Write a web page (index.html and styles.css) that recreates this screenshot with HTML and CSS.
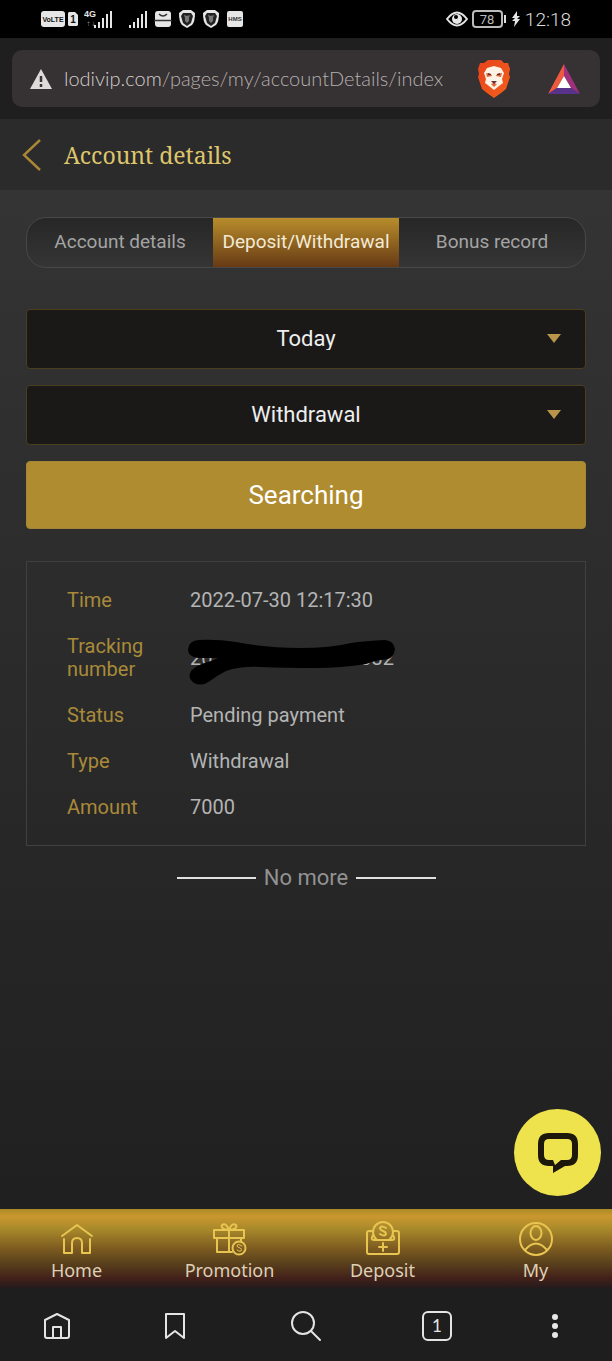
FILE: index.html
```html
<!DOCTYPE html>
<html lang="en">
<head>
<meta charset="utf-8">
<meta name="viewport" content="width=device-width, initial-scale=1">
<title>Account details</title>
<link rel="stylesheet" href="styles.css">
</head>
<body>
<div class="status-bar">
  <div class="status-group status-left">
    <svg class="icon" width="37" height="18" viewBox="0 0 37 18" fill="#e6e6e6">
      <rect x="0" y="1" width="24" height="16" rx="3"/>
      <text x="12" y="12" text-anchor="middle" class="badge-small">VoLTE</text>
      <path d="M28 2h6l3 3v10l-1 1h-8l-1-1V3z"/>
      <text x="32" y="13" text-anchor="middle" class="badge-text">1</text>
    </svg>
    <svg class="icon" width="30" height="20" viewBox="0 0 30 20" fill="#e6e6e6">
      <text x="0" y="8" class="net-text">4G</text>
      <text x="2" y="17" class="net-small">↑↓</text>
      <path d="M10 16h2v3h-2zM14 13h2v6h-2zM18 9h2v10h-2zM22 5h2v14h-2zM26 2h2v17h-2z"/>
    </svg>
    <svg class="icon signal-second" width="20" height="18" viewBox="0 0 20 18" fill="#e6e6e6">
      <path d="M1 15h2v3H1zM5 12h2v6H5zM9 8h2v10H9zM13 4h2v14h-2zM17 1h2v17h-2z"/>
    </svg>
    <svg class="icon" width="18" height="18" viewBox="0 0 18 18">
      <rect x="1" y="1" width="16" height="16" rx="3" fill="#e6e6e6"/>
      <path d="M5 4q4 4 8 0M0 10.500h18" fill="none" stroke="#333" stroke-width="1.500"/>
    </svg>
    <svg class="icon" width="18" height="20" viewBox="0 0 18 20">
      <path d="M5 1h8l4 3q0 9-3 12l-5 3-5-3Q1 13 1 4z" fill="#e6e6e6"/>
      <path d="M5 4h8l2 3-2 7-4 3-4-3-2-7z" fill="#222"/>
      <path d="M6 6l3 1 3-1-1 3v3l-2 2-2-2V9z" fill="#777"/>
    </svg>
    <svg class="icon" width="18" height="20" viewBox="0 0 18 20">
      <path d="M5 1h8l4 3q0 9-3 12l-5 3-5-3Q1 13 1 4z" fill="#e6e6e6"/>
      <path d="M5 4h8l2 3-2 7-4 3-4-3-2-7z" fill="#222"/>
      <path d="M6 6l3 1 3-1-1 3v3l-2 2-2-2V9z" fill="#777"/>
    </svg>
    <svg class="icon" width="18" height="18" viewBox="0 0 18 18">
      <rect x="1" y="1" width="16" height="16" rx="2" fill="#e6e6e6"/>
      <text x="9" y="11" text-anchor="middle" class="hms-text">HMS</text>
    </svg>
  </div>
  <div class="status-group status-right">
    <svg class="icon" width="22" height="16" viewBox="0 0 22 16">
      <path d="M1 8q10-13 20 0-10 13-20 0z" fill="none" stroke="#e6e6e6" stroke-width="2"/>
      <circle cx="11" cy="8" r="5" fill="#e6e6e6"/><circle cx="10" cy="6" r="2" fill="#000"/>
    </svg>
    <svg class="icon" width="35" height="20" viewBox="0 0 35 20">
      <rect x="1" y="2" width="29" height="16" rx="3" fill="none" stroke="#bbb" stroke-width="2"/>
      <path d="M33 6v8" stroke="#ddd" stroke-width="2"/>
      <text x="15" y="15" text-anchor="middle" class="battery-text">78</text>
    </svg>
    <svg class="icon" width="10" height="16" viewBox="0 0 10 16" fill="#e6e6e6"><path d="M6 0L1 7h3L1 10h3l-1 6 6-8H6l3-3H6z"/></svg>
    <span class="clock">12:18</span>
  </div>
</div>

<div class="browser-bar">
  <div class="address">
    <svg class="icon" width="24" height="22" viewBox="0 0 24 22"><path d="M12 1l11 20H1z" fill="#dedbdb"/><path d="M12 8v6M12 16v3" stroke="#383334" stroke-width="2.500"/></svg>
    <span class="url"><span class="host">lodivip.com</span>/pages/my/accountDetails/index</span>
    <button class="plain" aria-label="Shields">
      <svg class="icon" width="34" height="40" viewBox="0 0 34 40">
        <defs><linearGradient id="lion" y2="1"><stop stop-color="#e8431b"/><stop offset="1" stop-color="#f4601c"/></linearGradient></defs>
        <path d="M11 1h13l3 3h4l2 6-1 5 1 3-4 12-5 4-7 5-7-5-5-4L1 18l1-3-1-5 2-6h4z" fill="url(#lion)"/>
        <path d="M10 9l7-2 7 2 3 5-2 6 1 4-4 3-5 4-5-4-4-3 1-4-2-6z" fill="#fff3e6"/>
        <path d="M9 14l5 1 1 2-5 1zM25 14l-5 1-1 2 5 1zM14 25l3-1 3 1-3 3z" fill="#df6437"/>
        <path d="M11 14l3 1v1h-3zM23 14l-3 1v1h3zM14 22h6l-3 3z" fill="#63303a"/>
      </svg>
    </button>
    <button class="plain" aria-label="Rewards">
      <svg class="icon" width="34" height="32" viewBox="0 0 34 32">
        <path d="M17 1L1 31l9-6 7-12z" fill="#ee5a40"/><path d="M17 1l16 30-9-6-7-12z" fill="#a0307c"/><path d="M1 31h32l-9-6H10z" fill="#59328c"/><path d="M17 13l7 12H10z" fill="#fff"/>
      </svg>
    </button>
  </div>
</div>

<header class="page-header">
  <button class="plain" aria-label="Back"><svg class="icon" width="20" height="34" viewBox="0 0 20 34"><path d="M18 2L2 17l16 15" fill="none" stroke="#a98735" stroke-width="2.400"/></svg></button>
  <h1 class="title">Account details</h1>
</header>

<main class="content">
  <div class="tabs" role="tablist">
    <button class="tab" role="tab">Account details</button>
    <button class="tab tab-active" role="tab" aria-selected="true">Deposit/Withdrawal</button>
    <button class="tab" role="tab">Bonus record</button>
  </div>
  <div class="filters">
    <div class="select-wrap"><select class="select" aria-label="Period"><option>Today</option></select></div>
    <div class="select-wrap"><select class="select" aria-label="Record type"><option>Withdrawal</option></select></div>
    <button class="search">Searching</button>
  </div>
  <dl class="record">
    <dt>Time</dt><dd>2022-07-30 12:17:30</dd>
    <dt>Tracking number</dt>
    <dd class="tracking"><span>20</span><span>032</span>
      <svg class="redaction" viewBox="0 0 212 56" width="212" height="56"><path d="M12 9Q30 8 50 11 80 17 114 17 145 17 165 12 180 10 199 9 208 10 209 18 208 26 202 28 190 29 180 33 155 37 130 37 100 37 75 36 55 35 40 40 32 44 24 50 16 56 8 52 1 47 5 40 10 34 25 30L32 27H12Q2 26 2 18 3 10 12 9z"/></svg>
    </dd>
    <dt>Status</dt><dd>Pending payment</dd>
    <dt>Type</dt><dd>Withdrawal</dd>
    <dt>Amount</dt><dd>7000</dd>
  </dl>
  <p class="end">No more</p>
</main>

<footer class="footer">
  <button class="chat" aria-label="Chat"><svg class="icon" width="42" height="42" viewBox="0 0 42 42"><path d="M16 31h-4q-8 0-8-8V12q0-8 8-8h18q8 0 8 8v11q0 8-8 8h-4" fill="none" stroke="#1c190a" stroke-width="6"/><path d="M16 28v13l12-7v-6h-4l-6 5z" fill="#1c190a"/></svg></button>
  <nav class="site-nav">
    <a class="nav-item" href="#"><svg class="icon gold" viewBox="0 0 36 36" width="36" height="36"><path d="M3 15L18 4l15 11M5 18v14h8V22q0-5 5-5t5 5v10h8V18"/></svg>Home</a>
    <a class="nav-item" href="#"><svg class="icon gold" viewBox="0 0 36 36" width="36" height="36"><path d="M2 9h30v8H2zM5 17v14h15M29 17v3M17 9v22M17 9Q8 8 10 4q4-3 7 5 3-8 7-5 2 4-7 5"/><circle cx="27" cy="27" r="6.500"/><path class="thin" d="M30 25q-5-3-5 0 0 1 3 2t1 3q-2 1-4-1"/></svg>Promotion</a>
    <a class="nav-item" href="#"><svg class="icon gold" viewBox="0 0 36 36" width="36" height="36"><path d="M12 19A10 10 0 1 1 24 19M7 10H4q-2 0-2 2v19q0 2 2 2h28q2 0 2-2V12q0-2-2-2h-3M8 14q-3 5 1 5h18q4 0 1-5M18 22v8M14 26h8M21 7q-5-3-6 0 0 2 3 3t3 3q-1 3-6 0"/></svg>Deposit</a>
    <a class="nav-item" href="#"><svg class="icon gold" viewBox="0 0 36 36" width="36" height="36"><circle cx="18" cy="18" r="16"/><ellipse cx="18" cy="12" rx="5.500" ry="7"/><path d="M7 29q11-13 22 0"/></svg>My</a>
  </nav>
  <nav class="browser-nav">
    <button class="plain" aria-label="Home"><svg class="icon line" viewBox="0 0 30 30" width="30" height="30"><path d="M3 9L15 3l12 6v16q0 2-2 2H5q-2 0-2-2zM11 27V16h8v11"/></svg></button>
    <button class="plain" aria-label="Bookmarks"><svg class="icon line" viewBox="0 0 30 30" width="30" height="30"><path d="M6 3h18v24l-9-7-9 7z"/></svg></button>
    <button class="plain wide" aria-label="Search"><svg class="icon line" viewBox="0 0 30 30" width="30" height="30"><circle cx="12" cy="12" r="11"/><path d="M20 20l9 9"/></svg></button>
    <button class="plain" aria-label="Tabs"><svg class="icon line" viewBox="0 0 30 30" width="30" height="30"><rect x="1" y="1" width="28" height="28" rx="5"/><text x="15" y="21" text-anchor="middle" class="tab-count">1</text></svg></button>
    <button class="plain" aria-label="Menu"><svg class="icon" viewBox="0 0 30 30" width="30" height="30" fill="#e8e8e8"><circle cx="15" cy="6" r="3"/><circle cx="15" cy="15" r="3"/><circle cx="15" cy="24" r="3"/></svg></button>
  </nav>
</footer>
</body>
</html>
```
FILE: styles.css
```css
* { box-sizing: border-box; }
body {
  margin: 0;
  min-height: 100vh;
  display: flex;
  flex-direction: column;
  background: #202020;
  color: #bdbdbd;
  font-family: Roboto, "Liberation Sans", sans-serif;
  font-size: 20px;
  line-height: 23px;
}
button, select { font: inherit; color: inherit; }
.icon { display: block; flex: none; }
.plain { padding: 0; border: 0; background: none; display: flex; justify-content: center; }

.status-bar {
  height: 38px;
  padding: 0 41px;
  background: #000;
  display: flex;
  align-items: center;
  justify-content: space-between;
}
.status-group { display: flex; align-items: center; gap: 6px; }
.status-right { gap: 4px; }
.signal-second { margin: 0 0 0 8px; }
.badge-text { font: 700 10px "Liberation Sans", sans-serif; fill: #111; }
.badge-small { font: 700 7px "Liberation Sans", sans-serif; fill: #111; }
.net-text { font: 700 9px "Liberation Sans", sans-serif; }
.net-small { font: 6px "DejaVu Sans", sans-serif; fill: #777; }
.hms-text { font: 700 6px "Liberation Sans", sans-serif; fill: #333; }
.battery-text { font: 13px Roboto, sans-serif; fill: #bbb; }
.clock { color: #ddd; font-weight: 300; font-size: 19px; }

.browser-bar { padding: 12px; background: #201f20; }
.address {
  height: 57px;
  padding: 0 19px 0 17px;
  border-radius: 10px;
  background: #363132;
  display: flex;
  align-items: center;
}
.url {
  flex: 1;
  padding-left: 11px;
  color: #b5b0b1;
  font-family: Lato, sans-serif;
  font-weight: 300;
  font-size: 20px;
}
.host { color: #d4cfd0; }
.address .plain + .plain { margin-left: 36px; }

.page-header {
  height: 71px;
  padding: 0 22px;
  background: #2b2b2b;
  display: flex;
  align-items: center;
  gap: 22px;
}
.title {
  margin: 0;
  color: #dfc66c;
  font: 400 23px/34px "Noto Serif", "Liberation Serif", serif;
}

.content {
  flex: 1;
  padding: 27px 26px;
  background: linear-gradient(#343434, #272727 65%, #202020);
}
.tabs {
  height: 51px;
  display: grid;
  grid-template-columns: repeat(3, 1fr);
  border: 1px solid #484848;
  border-radius: 20px;
  background: linear-gradient(#272727, #353535);
  overflow: hidden;
}
.tab { padding: 0 0 2px; border: 0; background: none; color: #a4a4a4; font-size: 19px; white-space: nowrap; }
.tab-active { background: linear-gradient(#b88d2c, #673a14); color: #f3ead6; }
.filters { margin-top: 41px; display: grid; gap: 16px; }
.select-wrap { position: relative; }
.select-wrap::after {
  content: "";
  position: absolute;
  right: 25px;
  top: 25px;
  border: 7px solid transparent;
  border-top: 9px solid #b8954a;
  border-bottom: 0;
  pointer-events: none;
}
.select {
  display: block;
  width: 100%;
  height: 60px;
  padding: 0 0 2px;
  appearance: none;
  border: 1px solid #4b3e1c;
  border-radius: 4px;
  background: #1a1918;
  color: #eee;
  font-size: 22px;
  text-align: center;
  text-align-last: center;
}
.search {
  height: 68px;
  border: 1px solid #a38636;
  border-radius: 4px;
  background: #af8c2f;
  color: #fff;
  font-size: 26px;
}
.record {
  margin: 32px 0 0;
  padding: 27px 40px 26px;
  border: 1px solid #404040;
  display: grid;
  grid-template-columns: 78px 1fr;
  gap: 23px 45px;
  align-items: center;
  color: #b4b4b4;
}
.record dt { color: #a98a39; }
.record dd { margin: 0; }
.tracking { position: relative; width: 204px; display: flex; justify-content: space-between; }
.redaction { position: absolute; left: -4px; top: -16px; }
.end {
  margin: 20px auto 0;
  width: 259px;
  display: flex;
  align-items: center;
  gap: 8px;
  color: #929292;
  font-size: 22px;
  white-space: nowrap;
}
.end::before, .end::after { content: ""; flex: 1; height: 2px; background: #e0e0e0; }

.footer { position: relative; }
.chat {
  position: absolute;
  right: 11px;
  bottom: 165px;
  width: 87px;
  height: 87px;
  padding: 0;
  border: 0;
  border-radius: 50%;
  background: #efe34d;
  display: grid;
  place-items: center;
}
.site-nav {
  height: 79px;
  padding-top: 12px;
  display: grid;
  grid-template-columns: repeat(4, 1fr);
  background: linear-gradient(#a98b27, #cb972e 9%, #a98a2b 25%, #7d5b20 50%, #5a421c 68%, #42201a 88%, #241b1c);
}
.nav-item {
  display: flex;
  flex-direction: column;
  align-items: center;
  gap: 2px;
  color: #ded0b6;
  font-family: "Noto Sans", sans-serif;
  font-size: 18px;
  text-decoration: none;
}
.gold { fill: none; stroke: #e8c451; stroke-width: 2; stroke-linejoin: round; stroke-linecap: round; }
.thin { stroke-width: 1; }
.browser-nav {
  height: 73px;
  padding: 2px 42px 0;
  background: #1e1e1f;
  display: flex;
  align-items: center;
  justify-content: space-between;
}
.wide { width: 56px; }
.line { fill: none; stroke: #e4e4e4; stroke-width: 2; stroke-linejoin: round; stroke-linecap: round; overflow: visible; }
.tab-count { font: 17px Lato, sans-serif; fill: #e4e4e4; stroke: none; }
```
